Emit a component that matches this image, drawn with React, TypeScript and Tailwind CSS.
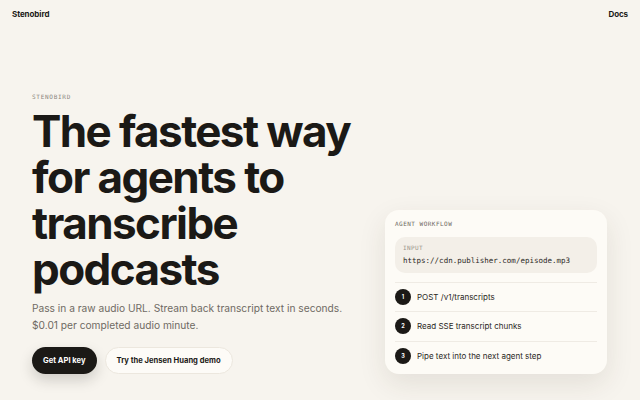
import React from 'react';

const STEPS = [
  'POST /v1/transcripts',
  'Read SSE transcript chunks',
  'Pipe text into the next agent step',
];

export default function App() {
  return (
    <div className="w-[640px] h-[400px] overflow-hidden bg-[#f7f4ee] text-[#1b1916] font-['Inter',_'Noto_Sans',_sans-serif]">
      {/* Header */}
      <header className="flex h-7 items-center justify-between px-3 text-[8px] font-bold tracking-[-0.01em]">
        <span>Stenobird</span>
        <span>Docs</span>
      </header>

      {/* Hero */}
      <main className="flex items-end justify-between pl-8 pr-[33px] pt-[65px]">
        <div className="flex flex-col">
          <p className="font-['DejaVu_Sans_Mono',_monospace] text-[6px] leading-[8px] tracking-[0.12em] text-[#8b867e]">
            STENOBIRD
          </p>
          <h1 className="mt-[7px] text-[44px] font-bold leading-[46px] tracking-[-0.036em] text-[#1b1916]">
            The fastest way
            <br />
            for agents to
            <br />
            transcribe
            <br />
            podcasts
          </h1>
          <p className="mt-2 text-[10.2px] leading-[17px] text-[#6f6a63]">
            Pass in a raw audio URL. Stream back transcript text in seconds.
            <br />
            $0.01 per completed audio minute.
          </p>
          <div className="mt-[13px] flex gap-2">
            <button className="h-[27px] rounded-full bg-[#1b1916] px-[11px] text-[7.6px] font-bold text-white shadow-[0_6px_14px_rgba(30,25,20,0.18)]">
              Get API key
            </button>
            <button className="h-[27px] rounded-full border border-[#ece7de] bg-[#fdfbf7] px-[11px] text-[7.6px] font-bold text-[#1b1916]">
              Try the Jensen Huang demo
            </button>
          </div>
        </div>

        {/* Workflow card */}
        <div className="w-[222px] rounded-[14px] bg-[#fdfbf6] px-[10px] pb-1 pt-[10px] shadow-[0_10px_28px_rgba(60,45,30,0.10)]">
          <p className="font-['DejaVu_Sans_Mono',_monospace] text-[6px] leading-[8px] tracking-[0.08em] text-[#6f6a63]">
            AGENT WORKFLOW
          </p>
          <div className="mt-[9px] h-9 rounded-[10px] bg-[#f3efe8] px-2 pt-[7px]">
            <p className="font-['DejaVu_Sans_Mono',_monospace] text-[6px] leading-[8px] tracking-[0.06em] text-[#9a958d]">
              INPUT
            </p>
            <p className="mt-[3px] font-['DejaVu_Sans_Mono',_monospace] text-[7.5px] leading-[12px] text-[#2b2824]">
              https://cdn.publisher.com/episode.mp3
            </p>
          </div>
          <ul className="mt-[9px]">
            {STEPS.map((step, i) => (
              <li
                key={step}
                className="flex h-[29.4px] items-center gap-[6px] border-t border-[#efebe4]"
              >
                <span className="flex h-4 w-4 items-center justify-center rounded-full bg-[#1b1916] text-[5.5px] font-bold text-white">
                  {i + 1}
                </span>
                <span className="text-[8px] text-[#2b2824]">{step}</span>
              </li>
            ))}
          </ul>
        </div>
      </main>
    </div>
  );
}
